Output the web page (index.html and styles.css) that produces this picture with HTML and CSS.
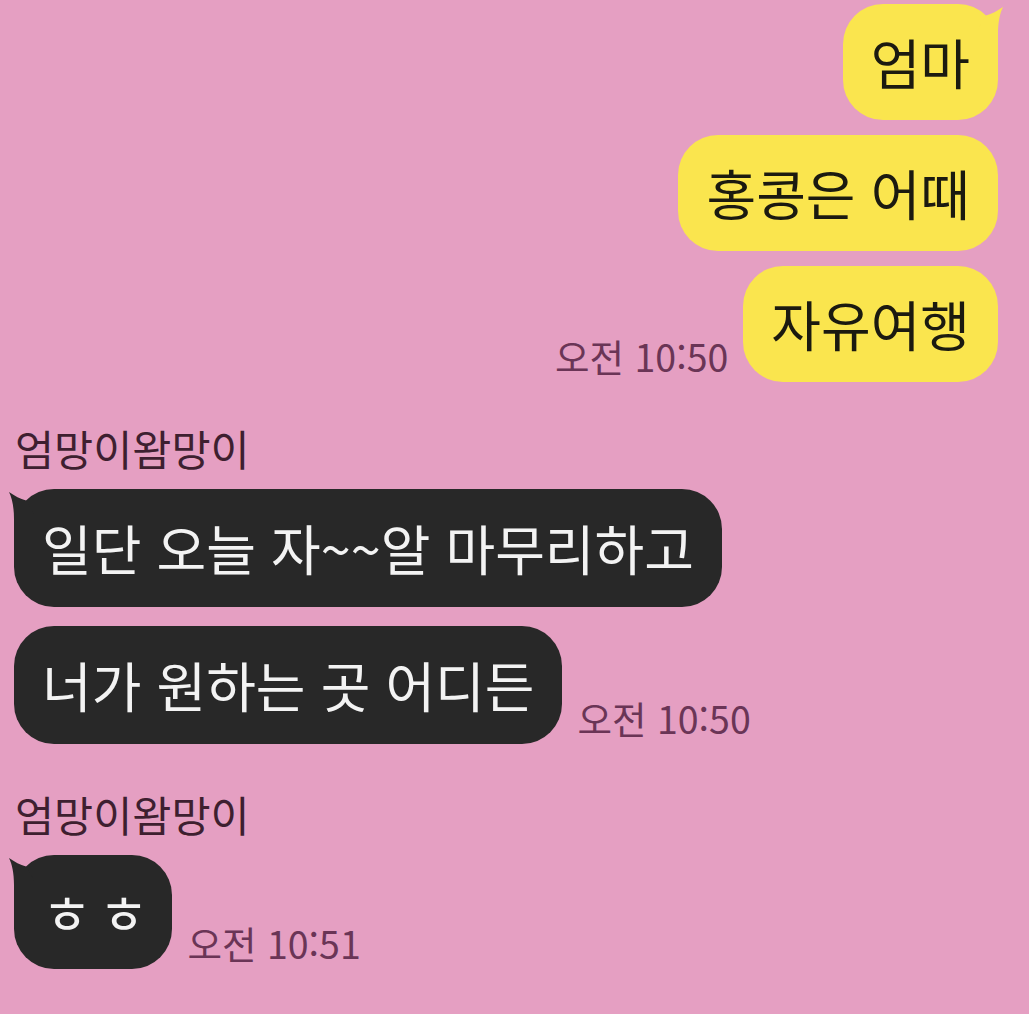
FILE: index.html
```html
<!DOCTYPE html>
<html lang="ko">

<head>
    <meta charset="UTF-8">
    <meta name="viewport" content="width=device-width, initial-scale=1.0">
    <title>엄망이왐망이</title>
    <link rel="stylesheet" href="styles.css">
</head>

<body>

    <div class="chat">

        <div class="row me">
            <div class="bubble mine">
                엄마
                <svg class="tail tail-right" width="40" height="50" viewBox="-8 -2 40 50">
                    <path d="M -5 3 C 1 7, 6 10, 12 11.4 L 20 25 L 0 42 L 0 30 C 0 18, -2 9, -5 3 Z" />
                </svg>
            </div>
        </div>
        <div class="row me">
            <div class="bubble mine">홍콩은 어때</div>
        </div>
        <div class="row me">
            <span class="time">오전 10:50</span>
            <div class="bubble mine">자유여행</div>
        </div>

        <div class="group">
            <div class="name">엄망이왐망이</div>
            <div class="row">
                <div class="bubble theirs">
                    일단 오늘 자~~알 마무리하고
                    <svg class="tail tail-left" width="40" height="50" viewBox="-8 -2 40 50">
                        <path d="M -5 3 C 1 7, 6 10, 12 11.4 L 20 25 L 0 42 L 0 30 C 0 18, -2 9, -5 3 Z" />
                    </svg>
                </div>
            </div>
            <div class="row">
                <div class="bubble theirs">너가 원하는 곳 어디든</div>
                <span class="time">오전 10:50</span>
            </div>
        </div>

        <div class="group">
            <div class="name">엄망이왐망이</div>
            <div class="row">
                <div class="bubble theirs jamo">
                    ㅎ ㅎ
                    <svg class="tail tail-left" width="40" height="50" viewBox="-8 -2 40 50">
                        <path d="M -5 3 C 1 7, 6 10, 12 11.4 L 20 25 L 0 42 L 0 30 C 0 18, -2 9, -5 3 Z" />
                    </svg>
                </div>
                <span class="time">오전 10:51</span>
            </div>
        </div>

    </div>

</body>

</html>
```

FILE: styles.css
```css
body {
    margin: 0;
    padding: 0;
    background-color: #e59fc2;
    font-family: "Noto Sans CJK KR", "Noto Sans", sans-serif;
}

.chat {
    display: flex;
    flex-direction: column;
    padding: 4px 31px 40px 14px;
}

.row {
    display: flex;
    align-items: flex-end;
    gap: 15px;
}

.row.me {
    justify-content: flex-end;
}

.row.me + .row.me {
    margin-top: 15px;
}

.group .row + .row {
    margin-top: 19px;
}

.bubble {
    position: relative;
    font-size: 54px;
    line-height: 74px;
    padding: 21px 28px;
    border-radius: 40px;
    white-space: nowrap;
}

.mine {
    background-color: #fae54e;
    color: #1b1a10;
    fill: #fae54e;
}

.theirs {
    background-color: #282828;
    color: #f3f3f3;
    fill: #282828;
    line-height: 76px;
}

/* compatibility jamo are drawn wider than the phone font */
.jamo {
    letter-spacing: -4px;
    line-height: 72px;
}

.tail {
    position: absolute;
    top: -2px;
    overflow: visible;
}

.tail-left {
    left: -8px;
}

.tail-right {
    right: -8px;
    transform: scaleX(-1);
}

.time {
    font-size: 37.5px;
    line-height: 1;
    margin-bottom: 8px;
    color: #6a3556;
    white-space: nowrap;
}

.group {
    margin-top: 42px;
}

.group + .group {
    margin-top: 46px;
}

.name {
    font-size: 42.5px;
    line-height: 48px;
    color: #3e1f30;
    margin: 0 0 17px 1px;
}
```
